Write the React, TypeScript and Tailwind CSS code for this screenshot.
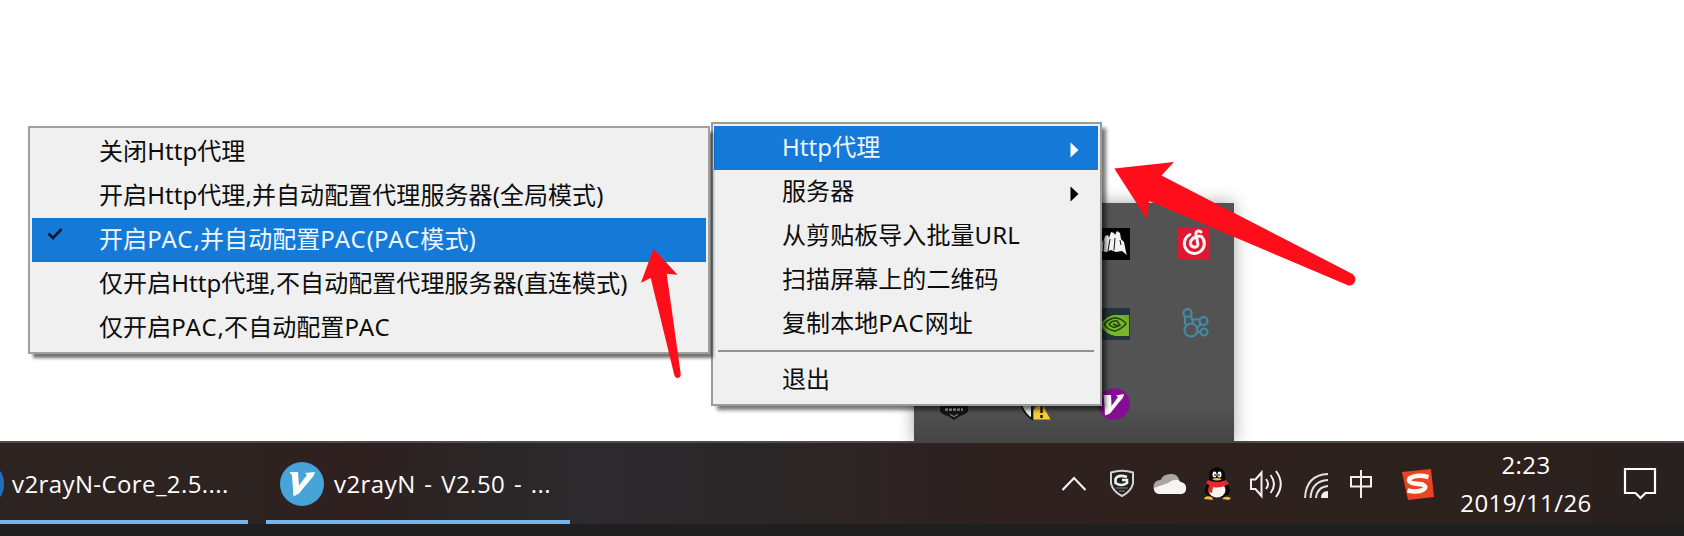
import React from "react";

type Item = { label: string; active?: boolean; checked?: boolean; submenu?: boolean };

const modes: Item[] = [
  { label: "关闭Http代理" },
  { label: "开启Http代理,并自动配置代理服务器(全局模式)" },
  { label: "开启PAC,并自动配置PAC(PAC模式)", active: true, checked: true },
  { label: "仅开启Http代理,不自动配置代理服务器(直连模式)" },
  { label: "仅开启PAC,不自动配置PAC" },
];

const actions: Item[] = [
  { label: "Http代理", active: true, submenu: true },
  { label: "服务器", submenu: true },
  { label: "从剪贴板导入批量URL" },
  { label: "扫描屏幕上的二维码" },
  { label: "复制本地PAC网址" },
];

function Label({ text }: { text: string }) {
  return (
    <span className="flex-1 pb-[3px] leading-[41px] tracking-[0.07px]">
      {text.split(/(PAC)/).map((part, i) =>
        part === "PAC" ? (
          <span key={i} className="tracking-[1px]">
            {part}
          </span>
        ) : (
          part
        ),
      )}
    </span>
  );
}

function MenuRow({ item, wide }: { item: Item; wide?: boolean }) {
  return (
    <div
      className={`flex h-11 items-center whitespace-nowrap ${
        item.active ? "bg-[#1579d8] text-[#eef6ff]" : "text-[#0c0c0c]"
      }`}
    >
      <div className={`h-full shrink-0 ${wide ? "w-[67px] pl-[15px] pt-[9px]" : "w-[68px]"}`}>
        {item.checked && (
          <svg width="17" height="16" viewBox="0 0 17 16" fill="none" stroke="#06182c" strokeWidth="2.700">
            <path d="M1.500 6.500l4.500 4.500L14.500 2" />
          </svg>
        )}
      </div>
      <Label text={item.label} />
      {item.submenu && (
        <svg className="mr-[19px] mt-[3px]" width="9" height="16" viewBox="0 0 9 16" fill={item.active ? "#fff" : "#000"}>
          <path d="M0.500 0.500L8.500 8L0.500 15.500z" />
        </svg>
      )}
    </div>
  );
}

function ModeMenu() {
  return (
    <div className="absolute left-[28px] top-[126px] h-[228px] w-[682px] border-2 border-[#a0a0a0] bg-[#f0f0f0] px-[2px] py-[2px] shadow-[4px_5px_3px_-1px_rgba(0,0,0,0.55)]">
      {modes.map((m) => (
        <MenuRow key={m.label} item={m} wide />
      ))}
    </div>
  );
}

function MainMenu() {
  return (
    <div className="absolute left-[711px] top-[122px] h-[284px] w-[391px] border-2 border-[#9b9b9b] bg-[#f0f0f0] pl-px pr-[2px] py-[2px] shadow-[5px_5px_4px_-1px_rgba(0,0,0,0.55)]">
      {actions.map((a) => (
        <MenuRow key={a.label} item={a} />
      ))}
      <div className="mx-1 mb-[6px] mt-1 h-[2px] bg-[#909090]" />
      <MenuRow item={{ label: "退出" }} />
    </div>
  );
}

function TrayPanel() {
  return (
    <div className="absolute left-[914px] top-[203px] h-[240px] w-[320px] bg-gradient-to-b from-[#535353] from-85% to-[#454343] shadow-[0_0_16px_rgba(0,0,0,0.35)]">
      <svg width="320" height="240" viewBox="914 203 320 240">
        <rect x="1098" y="228" width="32" height="32" fill="#030303" />
        <path d="M1098 254l1-12 3-2 1 3 2-7 3-1 1 3 2-6 3 1 1 2 2-4 3 2 1 6 3 3 2 10 1 3-5-4-6 1-5-2-5 2-4-1z" fill="#f4f4f4" />
        <path d="M1103 252l1-11M1108 251l2-12M1114 250l1-12M1120 240l1 5" stroke="#222" strokeWidth="1.100" />

        <rect x="1178" y="228" width="32" height="32" fill="#df1733" />
        <g fill="none" stroke="#fff4ef" strokeWidth="3" strokeLinecap="round">
          <path d="M1190 234.500A10 10 0 1 0 1201.500 236.500C1198 235.500 1192 237 1190.500 242C1189.500 247 1197 249.500 1198 244.500L1196 234.500C1195.500 230.500 1199 230.500 1201 232" />
        </g>

        <rect x="1098" y="308" width="32" height="32" fill="#25333a" />
        <rect x="1114" y="315" width="15" height="21" fill="#70ad20" />
        <path d="M1100 324q9-10 17-9 8 2 12 10v11h-12q-12-1-17-12z" fill="#76b82a" />
        <path d="M1104 324q7-7 13-6 7 2 9 6-6 6-11 7-8-1-11-7zM1109 324q4-4 8-3 2 3 3 4-5 3-7 2-3-1-4-3zM1113 324l5 2" fill="none" stroke="#1e420e" strokeWidth="1.500" />

        <g fill="none" stroke="#438aa4" strokeWidth="2.200">
          <circle cx="1187.500" cy="313" r="4" />
          <circle cx="1191" cy="330" r="6.500" />
          <circle cx="1203.500" cy="321" r="4" />
          <circle cx="1204" cy="332" r="3.500" />
          <path d="M1185 317v8M1191 315l2 8M1192 320l7-1M1197 328l4-4M1197 332h4" />
        </g>

        <path d="M940 404h28v8q-4 3-8 4l-6 4-6-4q-5-1-8-4z" fill="#151515" />
        <path d="M945 409.500h18" stroke="#aaa" strokeWidth="2.500" strokeDasharray="3 1" />
        <path d="M950 414.500l4 2 4-2" stroke="#999" fill="none" />
        <path d="M1021 405q4 10 11 14V405z" fill="#eee" stroke="#151515" strokeWidth="2" />
        <path d="M1040.500 401l10 18.500h-17v-9z" fill="#f8cc35" />
        <path d="M1041.500 406v7M1041.500 415v3" stroke="#221b05" strokeWidth="2.500" />

        <circle cx="1114" cy="404" r="15.800" fill="#850d91" />
        <path d="M1103.500 395h7.500l.5 11 6.500-9-2-1.500 8-1.500-1 3.500-13 16-5 2-1-17z" fill="#fff" />
      </svg>
    </div>
  );
}

function Pointers() {
  return (
    <svg className="pointer-events-none absolute left-0 top-0" width="1684" height="536" viewBox="0 0 1684 536" fill="#ff0d1b">
      <path d="M1114.300 168.600L1174 162L1161.500 175.500L1352.500 274Q1356 277 1355.300 280.500Q1353.500 286 1348.500 285.500L1149 201L1147 219.500Z" />
      <path d="M653.500 248.700L677.500 274.800L666.700 273.700L680.800 374.500Q680.500 378 677 378Q675 378 674.300 375L650.700 278L641 282.700Z" />
    </svg>
  );
}

function TaskIcon() {
  return (
    <svg className="mt-[5px] shrink-0" width="44" height="46" viewBox="0 0 44 46">
      <circle cx="22" cy="23" r="22" fill="#46a4d9" />
      <path d="M9.500 11h8.500l1 13.500L27 14l-2-2L35 11l-1.500 4L19 32.500l-5.500 3-1.500-21z" fill="#fff" />
    </svg>
  );
}

function SystemTray() {
  return (
    <svg className="shrink-0" width="390" height="81" viewBox="1050 443 390 81" fill="none">
      <path d="M1062.500 490L1074 478L1085.500 490" stroke="#f3f0ef" strokeWidth="2.200" />

      <path d="M1111 472.500q11-3.500 22 0v11q-2 8-11 12.500-9-4.500-11-12.500z" fill="#22201f" stroke="#d5d2d0" strokeWidth="2" />
      <path d="M1127 477q-9-3-11.500 2v4q6 4 11.500 0v-3h-5" stroke="#f1f1f1" strokeWidth="2.600" />
      <path d="M1116 488h12M1119 491h6" stroke="#8b8785" strokeWidth="1.200" />

      <path d="M1159 494q-6-1-5.500-8 1-6 7-6 3-7 12-6 6 1 7 7l-5 13z" fill="#aaa6a5" />
      <path d="M1159 494q-5-1-5-6l14-5q8-6 13-1 6 1 5 8-1 4-5 4z" fill="#f7f4f3" />

      <path d="M1209 479q-1-11 8-12 9 1 8 12l5 10-1 5-6 3h-12l-6-4v-4z" fill="#090909" />
      <ellipse cx="1217" cy="490" rx="8.500" ry="7.500" fill="#f7f5f3" />
      <path d="M1208 480q9 4 18 0l3 4q-10 5-16 3l-1 6-4-1 1-7-3-2z" fill="#e7262e" />
      <ellipse cx="1214.500" cy="474.500" rx="2" ry="3" fill="#fff" />
      <ellipse cx="1219.500" cy="474.500" rx="2" ry="3" fill="#fff" />
      <path d="M1215 474v2M1219 474v2" stroke="#111" strokeWidth="1.200" />
      <path d="M1212 479q5-2 10 0-5 3-10 0zM1204 499q1-4 8-2l1 3zM1222 499q3-4 9-1l-2 2z" fill="#f0bd3b" />

      <g stroke="#f3f0ef" strokeWidth="2">
        <path d="M1251 479.500h4.500l6-7v23.500l-6-7h-4.500zM1266 479q4 5 0 10M1270.500 475q7 9 0 18M1276 471q9.500 13 0 26" />
        <path d="M1305 498q1-23 23-24M1310.500 498q1-17 17.500-18M1316 498q1-11 12-12" stroke="#e5e1df" />
        <path d="M1321 498q0-7 7-7v7z" fill="#f3f0ef" stroke="none" />
        <path d="M1351 477h20v9.500h-20zM1361 470v28" />
      </g>

      <path d="M1402 472l29-3 3 28-26 3z" fill="#e94323" />
      <path d="M1428.500 477q-12-3-19 1.500-2 4 5 5l8 1q6 3-1 6-6 2-14 0" stroke="#fff8ee" strokeWidth="4.500" />
    </svg>
  );
}

function Taskbar() {
  return (
    <div className="relative flex h-[81px] shrink-0 items-stretch bg-[linear-gradient(90deg,#2d2321_0%,#2d2321_15%,#302020_21%,#2b2424_26%,#2c2a2d_35%,#2b2628_45%,#2e211f_60%,#2d211e_90%,#27211f_100%)] font-['Open_Sans','Noto_Sans',sans-serif] text-white">
      <div className="flex w-[248px] items-center border-b-4 border-[#76b5e9]">
        <div className="-ml-[38px] mt-[5px] h-11 w-[42px] shrink-0 rounded-full bg-[#216fbd]" />
        <span className="ml-2 mt-[4px] whitespace-nowrap text-[24px] tracking-[0.4px]">v2rayN-Core_2.5....</span>
      </div>
      <div className="ml-[18px] flex w-[304px] items-center border-b-4 border-[#76b5e9] pl-[14px]">
        <TaskIcon />
        <span className="ml-[10px] mt-[4px] whitespace-nowrap text-[24px] tracking-[0.45px] [word-spacing:2px]">v2rayN - V2.50 - ...</span>
      </div>
      <div className="ml-[480px]">
        <SystemTray />
      </div>
      <div className="ml-[16px] mt-[3px] flex w-[140px] flex-col items-center text-[24px] leading-[38px] tracking-[0.4px]">
        <span>2:23</span>
        <span>2019/11/26</span>
      </div>
      <svg className="ml-[26px] mt-[23px]" width="36" height="36" viewBox="0 0 36 36" fill="none" stroke="#fff" strokeWidth="2.200">
        <path d="M3 3h30v24h-9.500l-5 5-5-5H3z" />
      </svg>
    </div>
  );
}

export default function App() {
  return (
    <div className="relative flex h-[536px] w-[1684px] flex-col overflow-hidden bg-white font-['Noto_Sans','Noto_Sans_CJK_SC',sans-serif] text-[24px]">
      <main className="h-[443px] shrink-0 border-b-2 border-[#514b4a]">
        <TrayPanel />
        <MainMenu />
        <ModeMenu />
      </main>
      <Taskbar />
      <div className="h-3 bg-[#1f1f1f]" />
      <Pointers />
    </div>
  );
}
